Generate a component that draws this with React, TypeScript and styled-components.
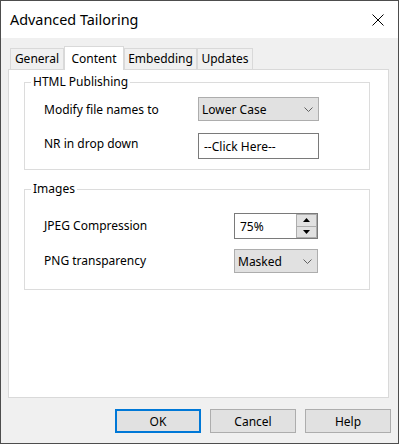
import React from "react";
import styled, { createGlobalStyle } from "styled-components";

const GlobalStyle = createGlobalStyle`
  html, body { margin: 0; padding: 0; background: #ffffff; }
  body { font-family: "Noto Sans", "Open Sans", sans-serif; font-size: 12px; color: #000; }
  * { box-sizing: border-box; }
`;

const Window = styled.div`
  width: 399px;
  height: 444px;
  border: 1px solid #4d4d4d;
  background: #f0f0f0;
  display: flex;
  flex-direction: column;
`;

const TitleBar = styled.div`
  height: 37px;
  flex: none;
  background: #ffffff;
  display: flex;
  align-items: center;
  justify-content: space-between;
  padding: 0 14px 0 9px;
`;

const Title = styled.span`
  font-size: 14.4px;
  line-height: 20px;
  color: #000;
`;

const CloseIcon = () => (
  <svg width="12" height="12" viewBox="0 0 12 12">
    <path d="M0.5 0.5 L11.5 11.5 M11.5 0.5 L0.5 11.5" stroke="#000" strokeWidth="1" fill="none" />
  </svg>
);

const Body = styled.div`
  flex: 1;
  display: flex;
  flex-direction: column;
  padding: 8px 9px 10px 7px;
`;

const TabStrip = styled.div`
  display: flex;
  align-items: flex-end;
  height: 23px;
  padding-left: 2px;
  position: relative;
  z-index: 1;
`;

const Tab = styled.div<{ $active?: boolean; $w: number }>`
  width: ${(p) => p.$w}px;
  height: ${(p) => (p.$active ? 24 : 21)}px;
  margin-bottom: ${(p) => (p.$active ? -1 : 0)}px;
  background: ${(p) => (p.$active ? "#ffffff" : "#f0f0f0")};
  border: 1px solid #d9d9d9;
  border-bottom: none;
  display: flex;
  align-items: center;
  justify-content: center;
  font-size: 12px;
  line-height: 16px;
  position: relative;
  z-index: ${(p) => (p.$active ? 2 : 1)};
`;

const Panel = styled.div`
  flex: 1;
  background: #ffffff;
  border: 1px solid #d9d9d9;
  padding: 4px 18px 0 15px;
  display: flex;
  flex-direction: column;
`;

const Group = styled.fieldset<{ $mt?: number }>`
  margin: ${(p) => p.$mt ?? 0}px 0 0 0;
  padding: 0;
  border: 1px solid #dcdcdc;
  min-width: 0;
`;

const Legend = styled.legend`
  padding: 0 2px;
  margin-left: 6px;
  font-size: 12px;
  line-height: 16px;
`;

const FormGrid = styled.div<{ $labelW: number; $gap: number; $pt: number; $pb: number }>`
  display: grid;
  grid-template-columns: ${(p) => p.$labelW}px auto;
  justify-content: start;
  align-items: center;
  row-gap: ${(p) => p.$gap}px;
  padding: ${(p) => p.$pt}px 0 ${(p) => p.$pb}px 19px;
`;

const Label = styled.span<{ $nudge?: number }>`
  font-size: 12px;
  line-height: 16px;
  position: relative;
  top: ${(p) => p.$nudge ?? 0}px;
`;

const Combo = styled.div<{ $w: number }>`
  width: ${(p) => p.$w}px;
  height: 24px;
  border: 1px solid #adadad;
  background: #e1e1e1;
  display: flex;
  align-items: center;
  justify-content: space-between;
  padding: 0 5px 0 3px;
  font-size: 12px;
`;

const Chevron = () => (
  <svg width="9" height="5" viewBox="0 0 9 5">
    <polyline points="0.5,0.5 4.5,4.5 8.5,0.5" stroke="#606060" strokeWidth="1" fill="none" />
  </svg>
);

const TextBox = styled.div<{ $w: number }>`
  width: ${(p) => p.$w}px;
  height: 26px;
  border: 1px solid #7a7a7a;
  background: #ffffff;
  display: flex;
  align-items: center;
  padding-left: 5px;
  font-size: 12px;
`;

const Spinner = styled.div`
  width: 84px;
  height: 26px;
  border: 1px solid #7a7a7a;
  background: #ffffff;
  display: flex;
`;

const SpinText = styled.div`
  flex: 1;
  display: flex;
  align-items: center;
  padding-left: 5px;
  font-size: 12px;
`;

const SpinButtons = styled.div`
  width: 21px;
  display: flex;
  flex-direction: column;
`;

const SpinButton = styled.div`
  flex: 1;
  border: 1px solid #adadad;
  background: #e1e1e1;
  display: flex;
  align-items: center;
  justify-content: center;
  & + & { border-top: none; }
`;

const Arrow = ({ up }: { up?: boolean }) => (
  <svg width="7" height="4" viewBox="0 0 7 4">
    <polygon points={up ? "0,4 7,4 3.5,0" : "0,0 7,0 3.5,4"} fill="#000" />
  </svg>
);

const ButtonRow = styled.div`
  display: flex;
  justify-content: flex-end;
  gap: 9px;
  margin: 11px -2px 0 0;
`;

const Button = styled.div<{ $default?: boolean }>`
  width: 86px;
  height: 24px;
  background: #e1e1e1;
  border: ${(p) => (p.$default ? "2px solid #0078d7" : "1px solid #adadad")};
  display: flex;
  align-items: center;
  justify-content: center;
  font-size: 12px;
`;

export default function App() {
  return (
    <>
      <GlobalStyle />
      <Window>
        <TitleBar>
          <Title>Advanced Tailoring</Title>
          <CloseIcon />
        </TitleBar>
        <Body>
          <TabStrip>
            <Tab $w={54}>General</Tab>
            <Tab $w={60} $active>Content</Tab>
            <Tab $w={73}>Embedding</Tab>
            <Tab $w={56}>Updates</Tab>
          </TabStrip>
          <Panel>
            <Group>
              <Legend>HTML Publishing</Legend>
              <FormGrid $labelW={154} $gap={12} $pt={7} $pb={10}>
                <Label $nudge={1}>Modify file names to</Label>
                <Combo $w={121}>
                  <span>Lower Case</span>
                  <Chevron />
                </Combo>
                <Label $nudge={-2}>NR in drop down</Label>
                <TextBox $w={121}>--Click Here--</TextBox>
              </FormGrid>
            </Group>
            <Group $mt={11}>
              <Legend>Images</Legend>
              <FormGrid $labelW={190} $gap={10} $pt={16} $pb={16}>
                <Label>JPEG Compression</Label>
                <Spinner>
                  <SpinText>75%</SpinText>
                  <SpinButtons>
                    <SpinButton><Arrow up /></SpinButton>
                    <SpinButton><Arrow /></SpinButton>
                  </SpinButtons>
                </Spinner>
                <Label>PNG transparency</Label>
                <Combo $w={84}>
                  <span>Masked</span>
                  <Chevron />
                </Combo>
              </FormGrid>
            </Group>
          </Panel>
          <ButtonRow>
            <Button $default>OK</Button>
            <Button>Cancel</Button>
            <Button>Help</Button>
          </ButtonRow>
        </Body>
      </Window>
    </>
  );
}
